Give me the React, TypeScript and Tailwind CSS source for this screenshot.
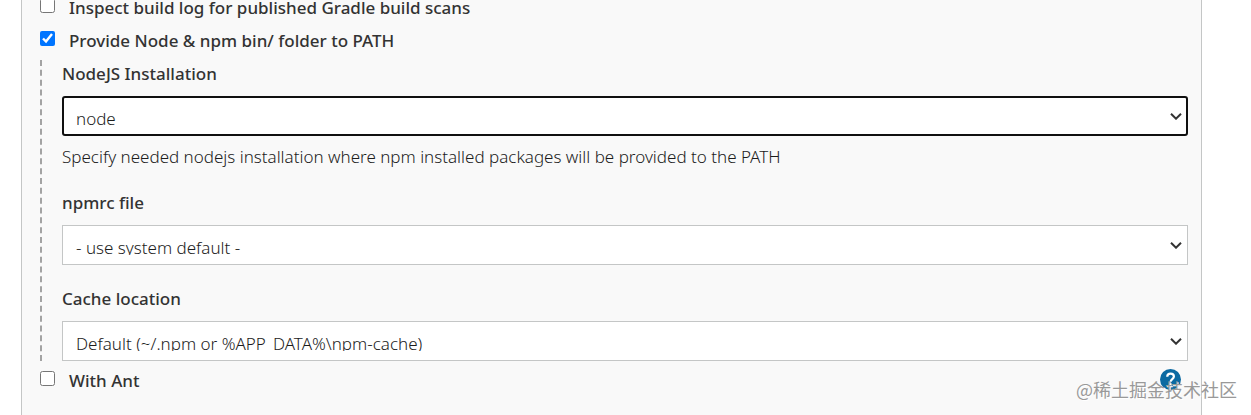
import type { ReactNode } from 'react'

type CheckRowProps = {
  id: string
  label: string
  checked?: boolean
  children?: ReactNode
}

type SelectFieldProps = {
  id: string
  label: string
  options: string[]
  focused?: boolean
  help?: string
}

const CheckRow = ({ id, label, checked = false, children }: CheckRowProps) => (
  <div className="flex h-[33px] items-center">
    <input id={id} type="checkbox" defaultChecked={checked} className="mb-1 size-[15px] shrink-0" />
    <label htmlFor={id} className="ml-3.5 leading-[15px] font-medium">
      {label}
    </label>
    {children}
  </div>
)

const Chevron = () => (
  <svg
    viewBox="0 0 12 8"
    fill="none"
    stroke="#333"
    strokeWidth="2"
    className="pointer-events-none absolute top-4 right-1.5 h-2 w-3"
  >
    <path d="M1 1.7 6 6.7 11 1.7" />
  </svg>
)

const SelectField = ({ id, label, options, focused = false, help }: SelectFieldProps) => (
  <div>
    <label htmlFor={id} className="block leading-7 font-medium">
      {label}
    </label>
    <div className="relative mt-2">
      <select
        id={id}
        className={`block h-10 w-full appearance-none bg-white font-light text-[#1c1c1c] outline-none ${
          focused ? 'rounded-[3px] border-2 border-[#101010] px-3 py-2' : 'border border-[#c4c6c6] px-[13px] py-[9px]'
        }`}
      >
        {options.map((option) => (
          <option key={option}>{option}</option>
        ))}
      </select>
      <Chevron />
    </div>
    {help && <p className="mt-2 leading-[25px] font-light text-[#1c1c1c]">{help}</p>}
  </div>
)

const HelpButton = () => (
  <button
    type="button"
    aria-label="Help"
    className="mr-[7px] mb-0.5 ml-auto flex size-[21px] items-center justify-center rounded-full bg-[#0b6aa2]"
  >
    <svg viewBox="0 0 21 21" fill="none" stroke="#fff" strokeWidth="2.2" className="size-[21px]">
      <path d="M7.2 7.8c.1-2 1.5-3.1 3.4-3.1 1.9 0 3.3 1.1 3.3 2.8 0 2.5-3.3 2.6-3.3 5.3" />
      <path d="M10.6 14.4v2.4" />
    </svg>
  </button>
)

const App = () => (
  <main className="relative h-screen overflow-hidden bg-white pr-[49px] pl-[21px] font-['Noto_Sans',sans-serif] text-[17px] text-[#333]">
    <section className="-mt-[9px] min-h-[calc(100vh+9px)] border-x border-[#c4c6c6] bg-[#f9f9f9] pr-[13px] pl-[18px]">
      <CheckRow id="gradle-scans" label="Inspect build log for published Gradle build scans" />
      <CheckRow id="node-path" label="Provide Node & npm bin/ folder to PATH" checked />

      <div className="my-[3px] flex flex-col gap-5 border-l-2 border-dashed border-[#a3a3a3] pl-5">
        <SelectField
          id="node-installation"
          label="NodeJS Installation"
          options={['node']}
          focused
          help="Specify needed nodejs installation where npm installed packages will be provided to the PATH"
        />
        <SelectField id="npmrc" label="npmrc file" options={['- use system default -']} />
        <SelectField id="cache" label="Cache location" options={['Default (~/.npm or %APP_DATA%\\npm-cache)']} />
      </div>

      <CheckRow id="with-ant" label="With Ant">
        <HelpButton />
      </CheckRow>
    </section>

    {/* Community watermark over the corner */}
    <span className="pointer-events-none absolute right-3.5 bottom-3.5 font-['Noto_Sans_CJK_SC',sans-serif] text-lg leading-6 text-[#999] [text-shadow:1px_1px_0_#fff]">
      @稀土掘金技术社区
    </span>
  </main>
)

export default App
